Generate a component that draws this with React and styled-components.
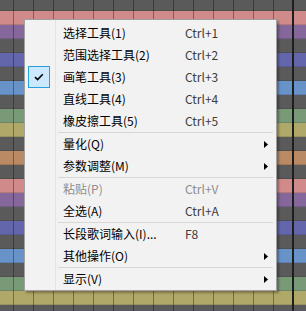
import React from "react";
import styled, { createGlobalStyle } from "styled-components";

const Global = createGlobalStyle`
  html, body { margin: 0; padding: 0; background: #5a5a5a; }
  body { width: 306px; height: 311px; overflow: hidden; }
`;

const Stage = styled.div`
  position: relative;
  width: 306px;
  height: 311px;
  overflow: hidden;
  background: #5a5a5a;
`;

const Roll = styled.div`
  display: flex;
  flex-direction: column;
  margin-top: -3px;
`;

const Row = styled.div`
  height: 14px;
  flex: none;
  background-color: ${(p) => p.$c};
  background-image:
    linear-gradient(to right, transparent 292px, #1e1e1e 292px, #1e1e1e 294px, transparent 294px),
    repeating-linear-gradient(to right, transparent 0, transparent 13px, rgba(0,0,0,0.35) 13px, rgba(0,0,0,0.35) 14px, transparent 14px, transparent 20px);
  box-shadow: inset 0 -1px 0 rgba(0,0,0,0.12);
`;

const Menu = styled.div`
  position: absolute;
  left: 24px;
  top: 19px;
  width: 253px;
  box-sizing: border-box;
  background: #f2f2f2;
  border: 1px solid #a0a0a0;
  padding: 2px 0 0 0;
  box-shadow: 2px 2px 2px rgba(0, 0, 0, 0.3);
  font-family: "Segoe UI", "Noto Sans CJK SC", "Noto Sans", sans-serif;
  font-size: 12px;
  &::before {
    content: "";
    position: absolute;
    left: 30px;
    top: 0;
    bottom: 0;
    width: 1px;
    background: #e3e3e3;
  }
`;

const Item = styled.div`
  display: grid;
  grid-template-columns: 38px 122px 1fr 14px;
  align-items: center;
  height: 22px;
  color: ${(p) => (p.$disabled ? "#8d8d8d" : "#000")};
`;

const IconCell = styled.div`
  display: flex;
  align-items: center;
  height: 22px;
  padding-left: 3px;
`;

const CheckBox = styled.div`
  width: 22px;
  height: 22px;
  box-sizing: border-box;
  background: #cce8ff;
  border: 1px solid #26a0da;
  display: flex;
  align-items: center;
  justify-content: center;
`;

const Label = styled.span`
  white-space: nowrap;
  line-height: 22px;
`;

const Shortcut = styled.span`
  white-space: nowrap;
  line-height: 22px;
  color: ${(p) => (p.$disabled ? "#8d8d8d" : "#3c3c3c")};
`;

const ArrowCell = styled.div`
  display: flex;
  align-items: center;
  padding-left: 2px;
`;

const Sep = styled.div`
  height: 1px;
  margin-left: 33px;
  margin-right: 3px;
  background: #d7d7d7;
`;

const rowColors = [
  "#5a5a5a",
  "#d08a8a",
  "#85679b",
  "#5a5a5a",
  "#6366ab",
  "#5a5a5a",
  "#6893c9",
  "#5a5a5a",
  "#789a76",
  "#b0a868",
  "#5a5a5a",
  "#b98a63",
  "#5a5a5a",
  "#d08a8a",
  "#85679b",
  "#5a5a5a",
  "#6366ab",
  "#5a5a5a",
  "#6893c9",
  "#5a5a5a",
  "#789a76",
  "#b0a868",
  "#5a5a5a",
];

const items = [
  { label: "选择工具(1)", sc: "Ctrl+1" },
  { label: "范围选择工具(2)", sc: "Ctrl+2" },
  { label: "画笔工具(3)", sc: "Ctrl+3", checked: true },
  { label: "直线工具(4)", sc: "Ctrl+4" },
  { label: "橡皮擦工具(5)", sc: "Ctrl+5" },
  { sep: true },
  { label: "量化(Q)", sub: true },
  { label: "参数调整(M)", sub: true },
  { sep: true },
  { label: "粘贴(P)", sc: "Ctrl+V", disabled: true },
  { label: "全选(A)", sc: "Ctrl+A" },
  { sep: true },
  { label: "长段歌词输入(I)...", sc: "F8" },
  { label: "其他操作(O)", sub: true },
  { sep: true },
  { label: "显示(V)", sub: true },
];

const Check = () => (
  <svg width="10" height="8" viewBox="0 0 10 8">
    <path d="M1 4.2 L3.6 6.6 L8.8 1.2" fill="none" stroke="#000" strokeWidth="1.6" />
  </svg>
);

const Arrow = () => (
  <svg width="4" height="7" viewBox="0 0 4 7">
    <polygon points="0,0 4,3.5 0,7" fill="#000" />
  </svg>
);

export default function App() {
  return (
    <Stage>
      <Global />
      <Roll>
        {rowColors.map((c, i) => (
          <Row key={i} $c={c} />
        ))}
      </Roll>
      <Menu>
        {items.map((it, i) =>
          it.sep ? (
            <Sep key={i} />
          ) : (
            <Item key={i} $disabled={it.disabled}>
              <IconCell>
                {it.checked && (
                  <CheckBox>
                    <Check />
                  </CheckBox>
                )}
              </IconCell>
              <Label>{it.label}</Label>
              <Shortcut $disabled={it.disabled}>{it.sc || ""}</Shortcut>
              <ArrowCell>{it.sub && <Arrow />}</ArrowCell>
            </Item>
          )
        )}
      </Menu>
    </Stage>
  );
}
